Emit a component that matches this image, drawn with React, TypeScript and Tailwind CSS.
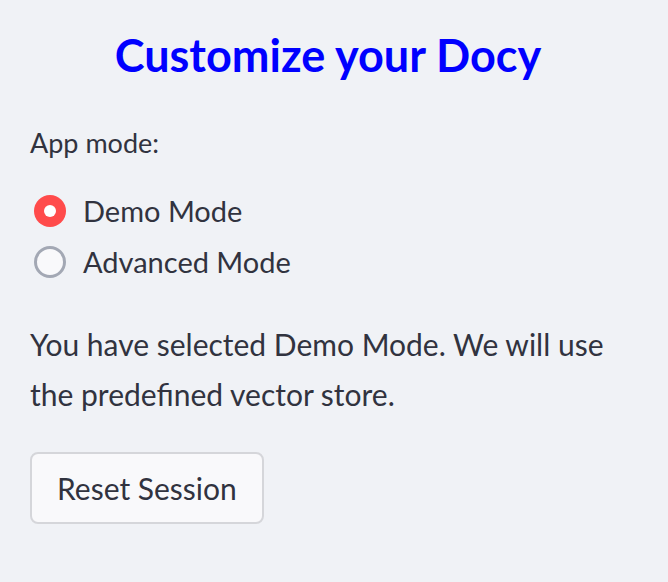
import React, { useState } from 'react';

const modes = ['Demo Mode', 'Advanced Mode'];

export default function App() {
  const [mode, setMode] = useState('Demo Mode');

  return (
    <div className="w-[668px] h-[582px] bg-[#f0f2f6] text-[#31333f] font-['Lato','Noto_Sans',sans-serif] overflow-hidden">
      <div className="pl-[30px] pr-[42px]">
        {/* Sidebar title */}
        <h2 className="pt-[27px] text-center text-[45px] leading-[56px] font-bold text-[#0000ff]">
          Customize your Docy
        </h2>

        {/* Mode picker */}
        <div className="mt-[42px] text-[27px] leading-[36px]">App mode:</div>
        <div className="mt-[29px] flex flex-col gap-[10px]">
          {modes.map((m) => {
            const on = m === mode;
            return (
              <label key={m} onClick={() => setMode(m)} className="flex items-center gap-[17px] pl-[4px] h-[41px] cursor-pointer">
                {on ? (
                  <span className="w-[32px] h-[32px] rounded-full bg-[#ff4b4b] flex items-center justify-center">
                    <span className="w-[12px] h-[12px] rounded-full bg-white" />
                  </span>
                ) : (
                  <span className="w-[32px] h-[32px] rounded-full border-[3px] border-[#a3a8b4] bg-[#f9f9fb]" />
                )}
                <span className="text-[29px] leading-[41px]">{m}</span>
              </label>
            );
          })}
        </div>

        <p className="mt-[37px] text-[30px] leading-[50px]">
          {`You have selected ${mode}. We will use the predefined vector store.`}
        </p>

        <button className="mt-[33px] h-[72px] px-[25px] rounded-[8px] border-2 border-[#d5d6da] bg-[#f9f9fb] text-[30px]">
          Reset Session
        </button>
      </div>
    </div>
  );
}
